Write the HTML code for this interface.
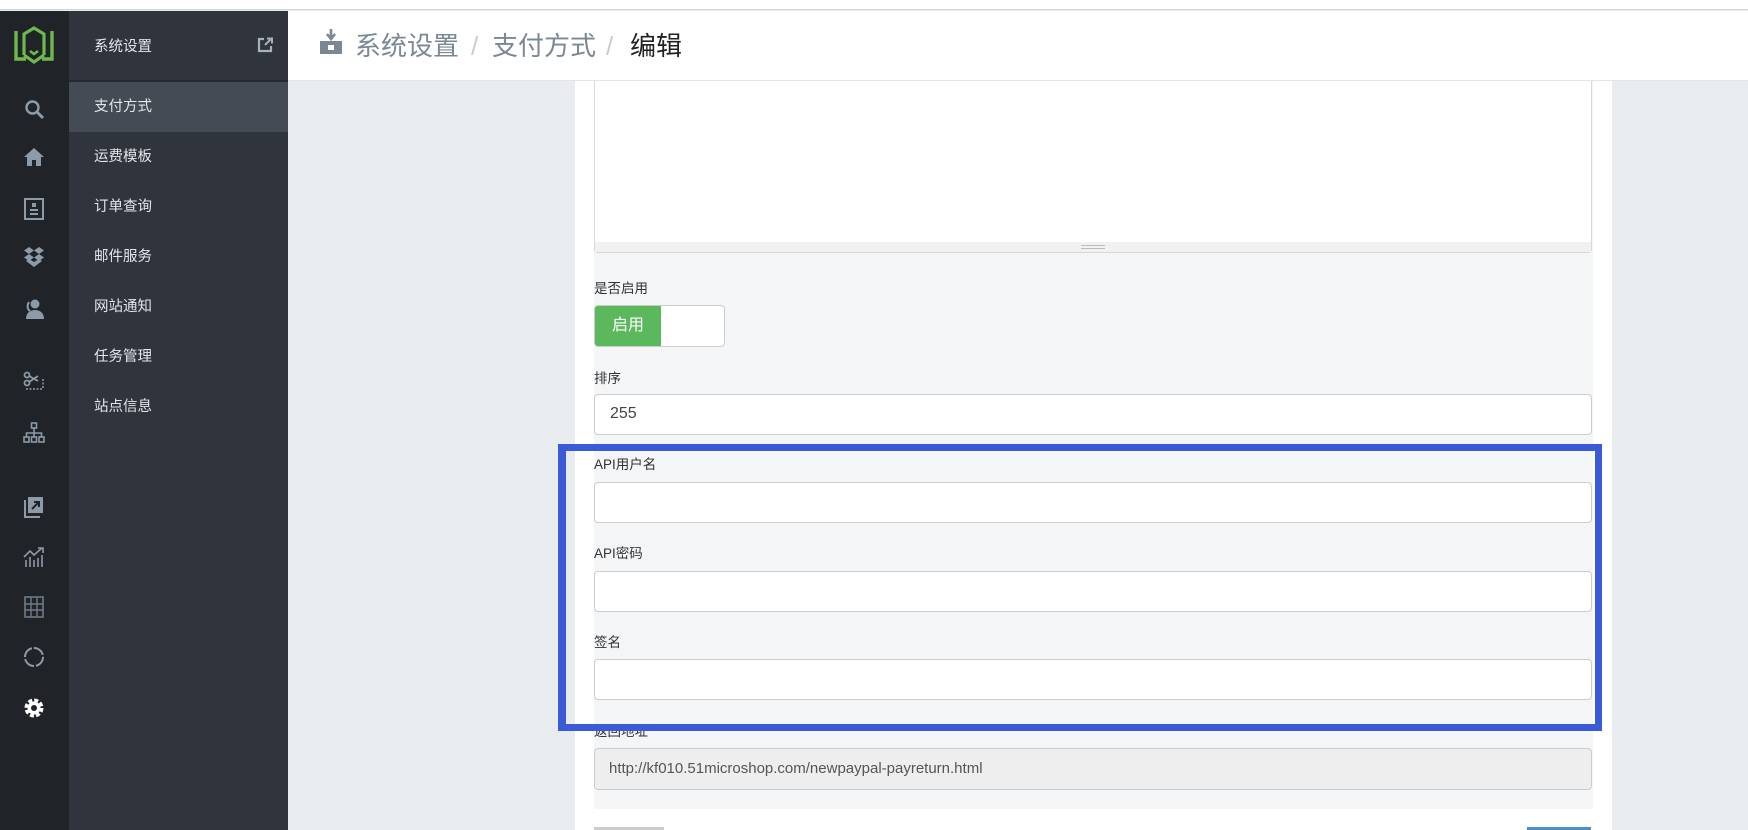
<!DOCTYPE html>
<html><head><meta charset="utf-8">
<style>
*{margin:0;padding:0;box-sizing:border-box}
body{width:1748px;height:830px;overflow:hidden;background:#e9ecef;font-family:"Liberation Sans","Noto Sans CJK SC",sans-serif;position:relative}
.abs{position:absolute}
#top{left:0;top:0;width:1748px;height:10px;background:#fff;border-bottom:1px solid #d5d5d5}
#rail{left:0;top:11px;width:69px;height:819px;background:#202328}
#menu{left:69px;top:11px;width:219px;height:819px;background:#30343c}
#menu .t{position:absolute;left:25px;color:#e3e6ea;font-size:14.5px;line-height:20px}
#active{left:69px;top:82px;width:219px;height:50px;background:#454b54}
#menuhead{left:69px;top:80px;width:219px;height:2px;background:#25282d}
#header{left:288px;top:11px;width:1460px;height:70px;background:#fff;border-bottom:1px solid #e2e4e7}
.bc{position:absolute;top:18px;font-size:26px;line-height:34px;color:#7a8795}
#card{left:575px;top:81px;width:1037px;height:749px;background:#fff}
#panel{left:594px;top:81px;width:999px;height:728px;background:#f4f5f7}
.lbl{position:absolute;left:594px;font-size:13.5px;color:#333;line-height:18px}
.inp{position:absolute;left:594px;width:998px;height:41px;background:#fff;border:1px solid #ccc;border-radius:4px}
svg{position:absolute}
</style></head><body>
<div class="abs" id="top"></div>
<div class="abs" id="rail"></div>
<div class="abs" id="menu">
<div class="t" style="top:26px">系统设置</div>
<div class="t" style="top:87px">支付方式</div>
<div class="t" style="top:136px">运费模板</div>
<div class="t" style="top:186px">订单查询</div>
<div class="t" style="top:236px">邮件服务</div>
<div class="t" style="top:286px">网站通知</div>
<div class="t" style="top:336px">任务管理</div>
<div class="t" style="top:386px">站点信息</div>
</div>
<div class="abs" id="menuhead"></div>
<div class="abs" id="active"><div style="position:absolute;left:25px;top:15px;color:#e3e6ea;font-size:14.5px;line-height:20px">支付方式</div></div>
<svg style="left:257px;top:37px" width="16" height="16" viewBox="0 0 16 16"><path d="M7 2H2v12h12V9" fill="none" stroke="#a8b0ba" stroke-width="2.2"/><path d="M8 8L14 2M10 1.5h5v5" fill="none" stroke="#a8b0ba" stroke-width="2"/></svg>
<svg style="left:13px;top:25px" width="42" height="40" viewBox="0 0 42 40"><path d="M3 6v28h10M39 6v28H29" fill="none" stroke="#6cba4c" stroke-width="3.4"/><path d="M11 30V9l10-6 10 6v21" fill="none" stroke="#6cba4c" stroke-width="3.2"/><path d="M11 30l10 7 10-7" fill="none" stroke="#6cba4c" stroke-width="3.2"/><path d="M17 26l4 3 4-3" fill="none" stroke="#6cba4c" stroke-width="2.6"/></svg>
<svg style="left:24px;top:99px" width="22" height="22" viewBox="0 0 22 22"><circle cx="8.5" cy="8.5" r="6" fill="none" stroke="#8d9aa8" stroke-width="2.4"/><path d="M13 13l6 6" stroke="#8d9aa8" stroke-width="3"/></svg>
<svg style="left:23px;top:147px" width="22" height="20" viewBox="0 0 22 20"><path d="M11 1L1 10h3v9h5v-6h4v6h5v-9h3z" fill="#8d9aa8"/></svg>
<svg style="left:24px;top:198px" width="20" height="22" viewBox="0 0 20 22"><rect x="1" y="1" width="18" height="20" fill="none" stroke="#8d9aa8" stroke-width="2"/><rect x="8" y="5" width="4" height="4" fill="#8d9aa8"/><rect x="6" y="11" width="8" height="2" fill="#8d9aa8"/><rect x="6" y="15" width="8" height="2" fill="#8d9aa8"/></svg>
<svg style="left:23px;top:246px" width="22" height="22" viewBox="0 0 22 22"><path d="M6 1l5 3.5-5 3.5-5-3.5zM16 1l5 3.5-5 3.5-5-3.5zM6 8l5 3.5-5 3.5-5-3.5zM16 8l5 3.5-5 3.5-5-3.5zM11 16l5-3 3 2-8 6-8-6 3-2z" fill="#8d9aa8"/></svg>
<svg style="left:23px;top:298px" width="22" height="22" viewBox="0 0 22 22"><circle cx="12" cy="6" r="4.5" fill="#8d9aa8"/><path d="M3 21c0-6 4-9 9-9s9 3 9 9z" fill="#8d9aa8"/><path d="M6 4c-2 3-2 7 1 9" stroke="#8d9aa8" stroke-width="2" fill="none"/></svg>
<svg style="left:23px;top:371px" width="22" height="22" viewBox="0 0 22 22"><circle cx="4" cy="4" r="2.5" fill="none" stroke="#8d9aa8" stroke-width="1.8"/><circle cx="4" cy="12" r="2.5" fill="none" stroke="#8d9aa8" stroke-width="1.8"/><path d="M6 5l9 5M6 11l9-6" stroke="#8d9aa8" stroke-width="1.8"/><path d="M3 18h17M20 8v10" stroke="#8d9aa8" stroke-width="1.5" stroke-dasharray="2 1.5" fill="none"/></svg>
<svg style="left:23px;top:422px" width="22" height="22" viewBox="0 0 22 22"><rect x="8.5" y="1" width="5" height="5" fill="none" stroke="#8d9aa8" stroke-width="1.6"/><path d="M11 6v5M3.5 15v-4h15v4M11 11v4" stroke="#8d9aa8" stroke-width="1.6" fill="none"/><rect x="1" y="15" width="5" height="5" fill="none" stroke="#8d9aa8" stroke-width="1.6"/><rect x="8.5" y="15" width="5" height="5" fill="none" stroke="#8d9aa8" stroke-width="1.6"/><rect x="16" y="15" width="5" height="5" fill="none" stroke="#8d9aa8" stroke-width="1.6"/></svg>
<svg style="left:24px;top:496px" width="20" height="22" viewBox="0 0 20 22"><path d="M1 4v17h15" fill="none" stroke="#8d9aa8" stroke-width="2"/><rect x="4" y="1" width="15" height="16" fill="#8d9aa8"/><path d="M8 13l7-7M10 6h5v5" stroke="#202328" stroke-width="2" fill="none"/></svg>
<svg style="left:23px;top:546px" width="22" height="22" viewBox="0 0 22 22"><path d="M1 11l6-6 4 4 8-7M15 2h5v5" stroke="#8d9aa8" stroke-width="1.6" fill="none"/><path d="M3 14v7M7 11v10M11 14v7M15 12v9M19 9v12" stroke="#8d9aa8" stroke-width="1.6"/></svg>
<svg style="left:24px;top:596px" width="20" height="22" viewBox="0 0 20 22"><rect x="1" y="1" width="18" height="20" fill="none" stroke="#6f7b88" stroke-width="1.6"/><path d="M1 8h18M1 14h18M7 1v20M13 1v20" stroke="#6f7b88" stroke-width="1.4"/></svg>
<svg style="left:23px;top:646px" width="22" height="22" viewBox="0 0 22 22"><circle cx="11" cy="11" r="9" fill="none" stroke="#8d9aa8" stroke-width="2" stroke-dasharray="12 2"/></svg>
<svg style="left:23px;top:697px" width="22" height="22" viewBox="0 0 22 22"><circle cx="11" cy="11" r="7" fill="none" stroke="#fff" stroke-width="5" stroke-dasharray="3.6 1.9"/><circle cx="11" cy="11" r="6.5" fill="#fff"/><circle cx="11" cy="11" r="3" fill="#202328"/></svg>

<div class="abs" id="header">
<svg style="left:31px;top:18px" width="24" height="26" viewBox="0 0 24 26"><path d="M12 0v9M8 5l4 5 4-5" stroke="#7a8795" stroke-width="2.6" fill="none"/><rect x="1" y="12" width="22" height="13" fill="#7a8795"/><rect x="9" y="16" width="6" height="5" fill="#fff"/></svg>
<div class="bc" style="left:67px">系统设置</div>
<div class="bc" style="left:183px;color:#c8ccd1">/</div>
<div class="bc" style="left:204px">支付方式</div>
<div class="bc" style="left:318px;color:#c8ccd1">/</div>
<div class="bc" style="left:342px;color:#222">编辑</div>
</div>

<div class="abs" id="card"></div>
<div class="abs" id="panel"></div>
<div class="abs" style="left:594px;top:81px;width:998px;height:172px;background:#fff;border:1px solid #d8d8d8;border-top:none;border-radius:0 0 4px 4px"></div>
<div class="abs" style="left:595px;top:242px;width:996px;height:10px;background:#f1f1f1"></div>
<div class="abs" style="left:1081px;top:245px;width:24px;height:4px;border-top:1px solid #bbb;border-bottom:1px solid #bbb"></div>

<div class="lbl" style="top:280px">是否启用</div>
<div class="abs" style="left:594px;top:305px;width:131px;height:42px;background:#fff;border:1px solid #ccc;border-radius:4px;overflow:hidden"><div style="width:66px;height:40px;background:#5cb85c;color:#fff;font-size:16px;line-height:40px;text-align:center">启用</div></div>

<div class="lbl" style="top:370px">排序</div>
<div class="inp" style="top:394px"><div style="position:absolute;left:15px;top:10px;font-size:16px;color:#444">255</div></div>

<div class="lbl" style="top:456px">API用户名</div>
<div class="inp" style="top:482px"></div>
<div class="lbl" style="top:545px">API密码</div>
<div class="inp" style="top:571px"></div>
<div class="lbl" style="top:634px">签名</div>
<div class="inp" style="top:659px"></div>
<div class="lbl" style="top:723px">返回地址</div>
<div class="inp" style="top:748px;background:#eee;height:42px"><div style="position:absolute;left:14px;top:11px;font-size:15px;color:#555">http://kf010.51microshop.com/newpaypal-payreturn.html</div></div>

<div class="abs" style="left:558px;top:444px;width:1044px;height:287px;border:7px solid #3a5bd5;border-left-width:8px"></div>
<div class="abs" style="left:594px;top:827px;width:70px;height:3px;background:#ccc"></div>
<div class="abs" style="left:1527px;top:827px;width:64px;height:3px;background:#4a90c8"></div>
</body></html>
